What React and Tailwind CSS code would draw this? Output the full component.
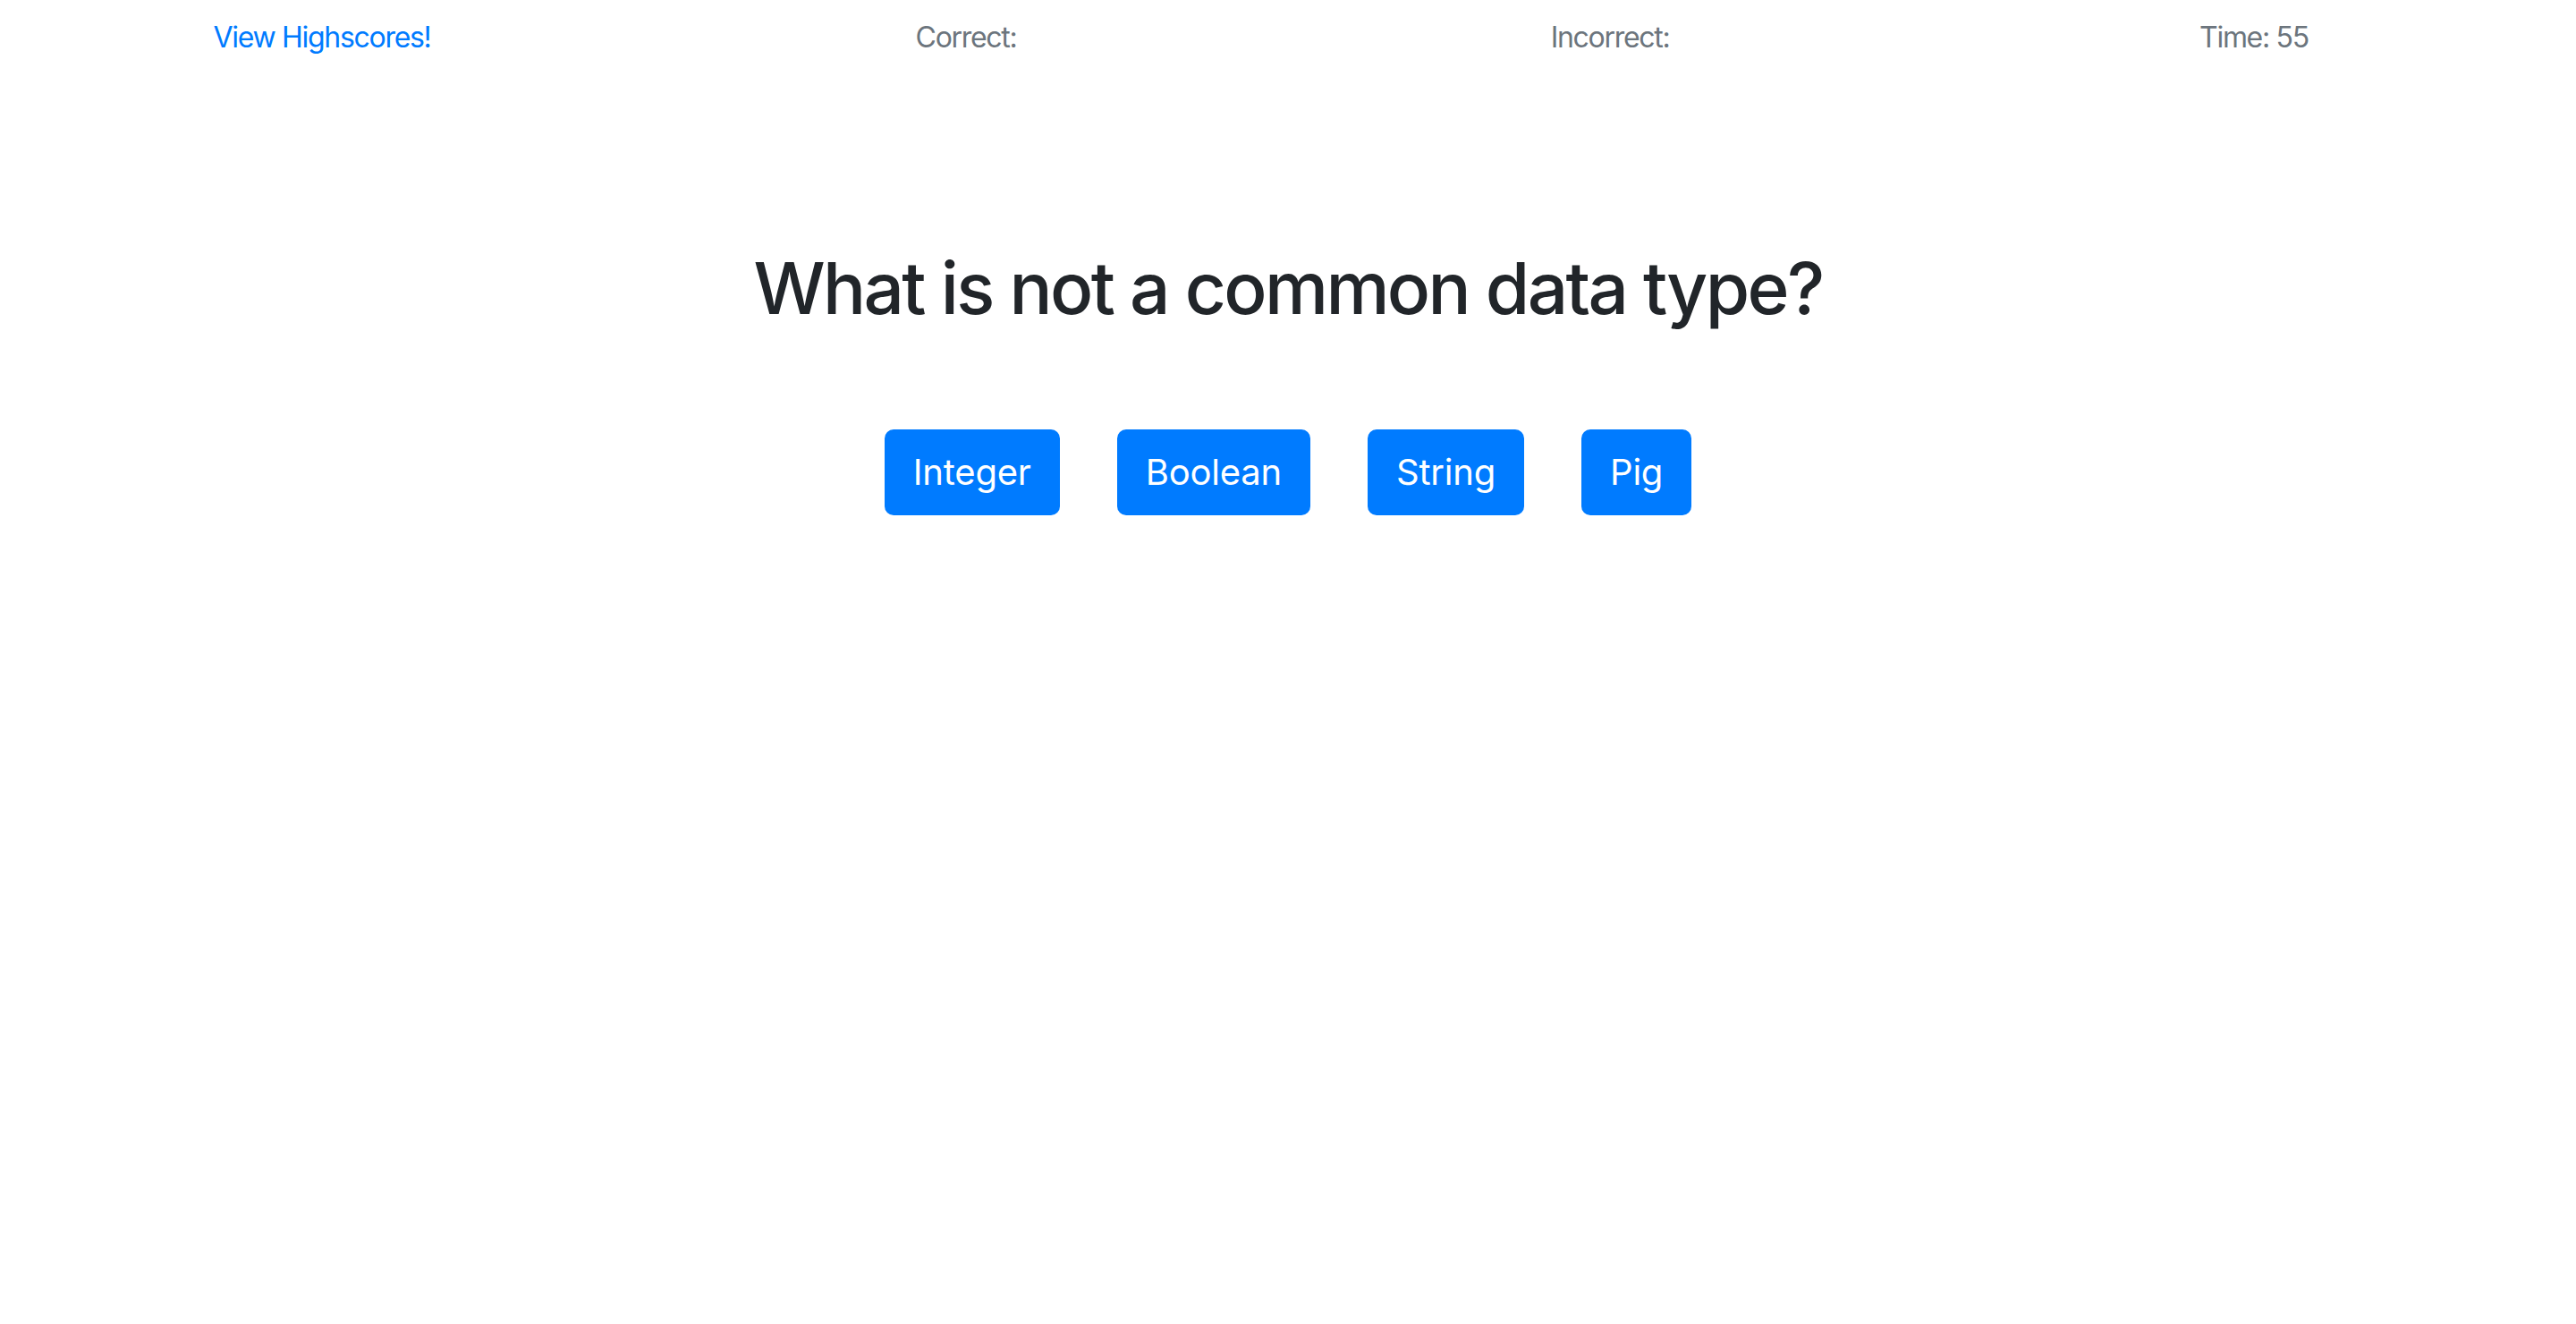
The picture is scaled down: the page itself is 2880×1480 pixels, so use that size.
import React from 'react';

const answers = ['Integer', 'Boolean', 'String', 'Pig'];

export default function App() {
    return (
        <div className="min-h-screen bg-white font-['Inter',sans-serif]">
            {/* top bar: four equal columns, text centred */}
            <div className="grid grid-cols-4 pt-[18px] text-center text-[32px] leading-[48px] tracking-[-1.3px]">
                <a href="#" className="text-[#007bff]">View Highscores!</a>
                <div className="text-[#6c757d]">Correct:</div>
                <div className="text-[#6c757d]">Incorrect:</div>
                <div className="text-[#6c757d]">Time: 55</div>
            </div>

            <h1 className="mt-[208px] text-center text-[80px] leading-[96px] font-medium tracking-[-2.6px] text-[#212529]">
                What is not a common data type?
            </h1>

            <div className="mt-[110px] flex justify-center gap-[64px]">
                {answers.map(a => (
                    <button
                        key={a}
                        className="h-[96px] px-[32px] rounded-[10px] bg-[#007bff] text-white text-[40px] leading-[60px] tracking-[-0.2px]"
                    >
                        {a}
                    </button>
                ))}
            </div>
        </div>
    );
}
